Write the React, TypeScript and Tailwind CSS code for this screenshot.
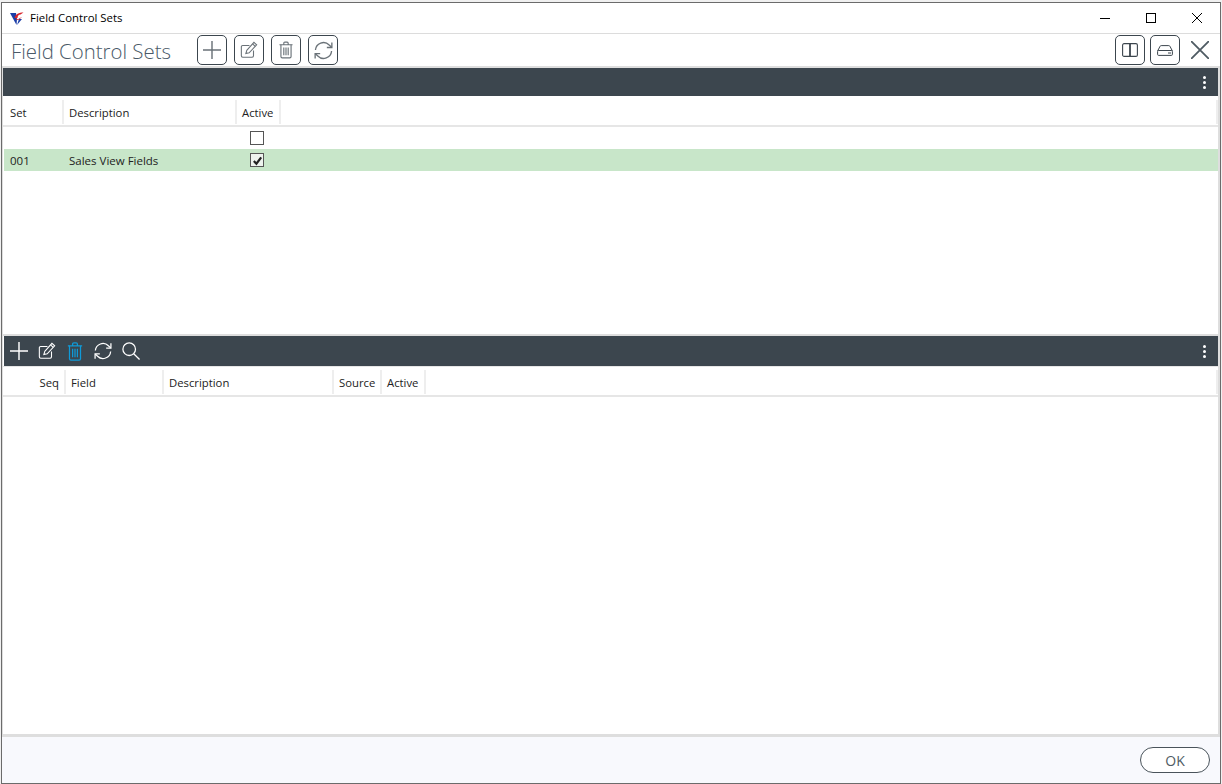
import type { ReactNode } from "react"

const IconPlus = ({ className = "" }: { className?: string }) => (
  <svg viewBox="0 0 20 20" className={className} fill="none" stroke="currentColor" strokeWidth="1.6">
    <path d="M10 0v20M0 10h20" />
  </svg>
)

const IconEdit = ({ className = "" }: { className?: string }) => (
  <svg viewBox="0 0 20 20" className={className} fill="none" stroke="currentColor" strokeWidth="1.2">
    <path d="M15 10.5V16.5a1.5 1.5 0 0 1-1.5 1.5H3a1.5 1.5 0 0 1-1.5-1.5V6.5A1.5 1.5 0 0 1 3 5h7.5" />
    <path d="M7.5 10.5 15.5 1.5l3 2.8-8.3 8.8-3.7.9z" />
    <path d="M14 3.2l2.9 2.8" />
  </svg>
)

const IconTrash = ({ className = "" }: { className?: string }) => (
  <svg viewBox="0 0 16 20" className={className} fill="none" stroke="currentColor" strokeWidth="1.3">
    <path d="M.5 4h15M5.5 4V2.2c0-.7.5-1.2 1.2-1.2h2.6c.7 0 1.2.5 1.2 1.2V4" />
    <path d="M2.2 4v13.5c0 .8.6 1.5 1.5 1.5h8.6c.9 0 1.5-.7 1.5-1.5V4" />
    <path d="M5.5 7v9M8 7v9M10.5 7v9" />
  </svg>
)

const IconRefresh = ({ className = "" }: { className?: string }) => (
  <svg viewBox="0 0 20 20" className={className} fill="none" stroke="currentColor" strokeWidth="1.4">
    <path d="M1.5 9.5A8.5 8.5 0 0 1 16 4.2L18.5 6.5" />
    <path d="M18.8 1.5v5.3h-5.3" />
    <path d="M18.5 10.5A8.5 8.5 0 0 1 4 15.8L1.5 13.5" />
    <path d="M1.2 18.5v-5.3h5.3" />
  </svg>
)

const IconSearch = ({ className = "" }: { className?: string }) => (
  <svg viewBox="0 0 20 20" className={className} fill="none" stroke="currentColor" strokeWidth="1.4">
    <circle cx="8" cy="8" r="7" />
    <path d="M13 13l6.5 6.5" />
  </svg>
)

const IconSplit = ({ className = "" }: { className?: string }) => (
  <svg viewBox="0 0 16 14" className={className} fill="none" stroke="currentColor" strokeWidth="1.1">
    <rect x="0.6" y="0.6" width="14.8" height="12.8" rx="1.5" />
    <path d="M8 .6v12.8" strokeWidth="1.8" />
  </svg>
)

const IconDrive = ({ className = "" }: { className?: string }) => (
  <svg viewBox="0 0 16 11" className={className} fill="none" stroke="currentColor" strokeWidth="1">
    <path d="M.6 6 3 1.4c.2-.5.6-.8 1.2-.8h7.6c.6 0 1 .3 1.2.8L15.4 6" />
    <rect x="0.6" y="5.5" width="14.8" height="4.9" rx="1" />
    <path d="M11 8h3" />
  </svg>
)

const Logo = () => (
  <svg viewBox="0 0 14 13" className="w-[14px] h-[13px]">
    <path d="M0 1h6L7 7l-.5 6z" fill="#1d3fa8" />
    <path d="M7 13 9 7h3z" fill="#1d3fa8" />
    <path d="M4.5 6C5.5 2 9 .5 13.5 0.5L10.5 2.5C8.5 2.7 7.5 4 7.5 6z" fill="#d9252b" />
    <path d="M6 7c1.5 1 3.5.5 5-1.5" fill="none" stroke="#d9252b" strokeWidth="1" />
  </svg>
)

const ToolButton = ({ children }: { children: ReactNode }) => (
  <button className="w-[30px] h-[30px] flex items-center justify-center rounded-[5px] border border-[#3c464e] bg-white text-[#6a7278]">
    {children}
  </button>
)

const HeaderCell = ({ width, className = "", children }: { width: string; className?: string; children: ReactNode }) => (
  <div className={`${width} h-[24px] shrink-0 flex items-center pt-[3px] px-[5px] border-r-2 border-[#eeeeee] ${className}`}>
    {children}
  </div>
)

const Kebab = () => (
  <div className="flex flex-col gap-[2px] mr-[12px]">
    <span className="w-[3px] h-[3px] rounded-full bg-white" />
    <span className="w-[3px] h-[3px] rounded-full bg-white" />
    <span className="w-[3px] h-[3px] rounded-full bg-white" />
  </div>
)

const Checkbox = ({ checked }: { checked?: boolean }) => (
  <span className={`w-[14px] h-[14px] flex items-center justify-center border ${checked ? "border-[#555] bg-[#eef3ee]" : "border-[#555] bg-white"}`}>
    {checked && (
      <svg viewBox="0 0 12 12" className="w-[11px] h-[11px]" fill="none" stroke="#222" strokeWidth="2.4">
        <path d="M2 6.5 4.8 9.5 10 2.5" />
      </svg>
    )}
  </span>
)

export default function App() {
  return (
    <div
      className="w-[1222px] h-[784px] overflow-hidden bg-[#f0f0f0] pt-[2px] px-px text-[11.3px] text-[#222]"
      style={{ fontFamily: '"Open Sans", "Noto Sans", sans-serif' }}
    >
      <div className="h-[782px] flex flex-col bg-white border border-[#6b6b6b]">
        {/* Title bar */}
        <div className="h-[31px] shrink-0 flex items-center border-b border-[#dcdcdc]">
          <div className="ml-[8px] mr-[6px] flex"><Logo /></div>
          <span className="text-[11.4px] text-black">Field Control Sets</span>
          <div className="ml-auto flex items-center text-black">
            <div className="w-[46px] flex justify-center"><span className="w-[10px] h-px bg-black" /></div>
            <div className="w-[46px] flex justify-center"><span className="w-[10px] h-[10px] border border-black" /></div>
            <div className="w-[46px] flex justify-center">
              <svg viewBox="0 0 10 10" className="w-[10px] h-[10px]" stroke="currentColor" strokeWidth="1"><path d="M0 0l10 10M10 0 0 10" /></svg>
            </div>
          </div>
        </div>

        {/* Toolbar */}
        <div className="h-[32px] shrink-0 flex items-center pl-[9px] pr-[5px] gap-[7px]">
          <span className="w-[179px] pt-[3px] text-[20.4px] font-light leading-none text-[#4a5a68] whitespace-nowrap">Field Control Sets</span>
          <ToolButton><IconPlus className="w-[18px] h-[18px]" /></ToolButton>
          <ToolButton><IconEdit className="w-[18px] h-[18px]" /></ToolButton>
          <ToolButton><IconTrash className="w-[14px] h-[18px]" /></ToolButton>
          <ToolButton><IconRefresh className="w-[19px] h-[19px]" /></ToolButton>
          <div className="ml-auto flex items-center gap-[5px]">
            <ToolButton><IconSplit className="w-[16px] h-[14px] text-[#3c464e]" /></ToolButton>
            <ToolButton><IconDrive className="w-[16px] h-[11px] text-[#3c464e]" /></ToolButton>
            <button className="w-[30px] h-[30px] flex items-center justify-center text-[#4f5b63]">
              <svg viewBox="0 0 18 18" className="w-[18px] h-[18px]" stroke="currentColor" strokeWidth="1.8"><path d="M0 0l18 18M18 0 0 18" /></svg>
            </button>
          </div>
        </div>

        <div className="flex-1 min-h-0 flex flex-col border-l border-r-2 border-t-2 border-[#dedede]">
          {/* Upper grid */}
          <div className="h-[266px] shrink-0 flex flex-col">
            <div className="h-[28px] shrink-0 flex items-center justify-end bg-[#3c464e]"><Kebab /></div>
            <div className="h-[31px] pt-[4px] shrink-0 flex items-start border-b-2 border-[#e6e6e6]">
              <HeaderCell width="w-[61px]" className="pl-[7px]">Set</HeaderCell>
              <HeaderCell width="w-[173px]">Description</HeaderCell>
              <HeaderCell width="w-[44px]">Active</HeaderCell>
              <div className="flex-1 h-[24px] border-r-2 border-[#eeeeee]" />
            </div>
            <div className="h-[22px] shrink-0 flex items-center">
              <div className="w-[234px]" />
              <div className="w-[44px] pl-[13px] flex"><Checkbox /></div>
            </div>
            <div className="h-[22px] shrink-0 flex items-center bg-[#c8e6c9] text-[11.5px] ml-px">
              <div className="w-[60px] pl-[6px] pt-[2px]">001</div>
              <div className="w-[173px] pl-[5px] pt-[2px]">Sales View Fields</div>
              <div className="w-[44px] pl-[13px] flex"><Checkbox checked /></div>
            </div>
          </div>

          {/* Lower grid */}
          <div className="flex-1 min-h-0 flex flex-col border-t-2 border-[#dedede]">
            <div className="h-[30px] shrink-0 flex items-center bg-[#3c464e] text-white pl-[6px] ml-px">
              <IconPlus className="w-[18px] h-[18px] mr-[10px]" />
              <IconEdit className="w-[18px] h-[18px] mr-[11px]" />
              <IconTrash className="w-[16px] h-[19px] mr-[11px] text-[#0f9ad8]" />
              <IconRefresh className="w-[18px] h-[18px] mr-[10px]" />
              <IconSearch className="w-[18px] h-[18px]" />
              <div className="ml-auto flex"><Kebab /></div>
            </div>
            <div className="h-[31px] pt-[3px] shrink-0 flex items-start border-t border-b-2 border-[#e6e6e6]">
              <HeaderCell width="w-[63px]" className="justify-end">Seq</HeaderCell>
              <HeaderCell width="w-[98px]">Field</HeaderCell>
              <HeaderCell width="w-[170px]">Description</HeaderCell>
              <HeaderCell width="w-[48px]">Source</HeaderCell>
              <HeaderCell width="w-[44px]">Active</HeaderCell>
              <div className="flex-1 h-[24px] border-r-2 border-[#eeeeee]" />
            </div>
            <div className="flex-1" />
          </div>
        </div>

        {/* Footer */}
        <div className="h-[49px] shrink-0 flex items-center justify-end pr-[10px] bg-[#f8f9fd] border-t-[3px] border-[#dedede]">
          <button className="w-[70px] h-[26px] rounded-full border border-[#4a545b] bg-white text-[14px] text-[#4f5b63]">OK</button>
        </div>
      </div>
    </div>
  )
}
